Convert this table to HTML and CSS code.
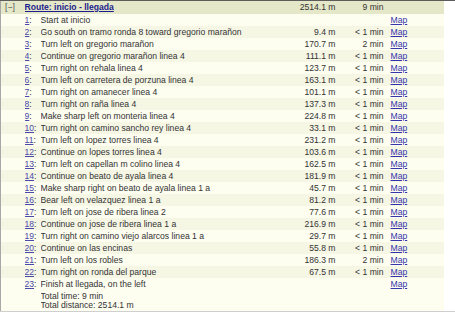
FILE: index.html
```html
<!DOCTYPE html>
<html>
<head>
<meta charset="utf-8">
<link rel="stylesheet" href="styles.css">
</head>
<body>
<div class="frame">
  <table class="route">
    <colgroup>
      <col class="c-toggle"><col class="c-num"><col class="c-text"><col class="c-dist"><col class="c-time"><col class="c-map">
    </colgroup>
    <tr class="head">
      <td class="toggle">[−]</td>
      <td colspan="2"><a class="title" href="#">Route: inicio - llegada</a></td>
      <td class="dist">2514.1 m</td>
      <td class="time">9 min</td>
      <td></td>
    </tr>
    <tr><td></td><td><a href="#">1</a>:</td><td>Start at inicio</td><td class="dist"></td><td class="time"></td><td class="map"><a href="#">Map</a></td></tr>
    <tr><td></td><td><a href="#">2</a>:</td><td>Go south on tramo ronda 8 toward gregorio marañon</td><td class="dist">9.4 m</td><td class="time">&lt; 1 min</td><td class="map"><a href="#">Map</a></td></tr>
    <tr><td></td><td><a href="#">3</a>:</td><td>Turn left on gregorio marañon</td><td class="dist">170.7 m</td><td class="time">2 min</td><td class="map"><a href="#">Map</a></td></tr>
    <tr><td></td><td><a href="#">4</a>:</td><td>Continue on gregorio marañon linea 4</td><td class="dist">111.1 m</td><td class="time">&lt; 1 min</td><td class="map"><a href="#">Map</a></td></tr>
    <tr><td></td><td><a href="#">5</a>:</td><td>Turn right on rehala linea 4</td><td class="dist">123.7 m</td><td class="time">&lt; 1 min</td><td class="map"><a href="#">Map</a></td></tr>
    <tr><td></td><td><a href="#">6</a>:</td><td>Turn left on carretera de porzuna linea 4</td><td class="dist">163.1 m</td><td class="time">&lt; 1 min</td><td class="map"><a href="#">Map</a></td></tr>
    <tr><td></td><td><a href="#">7</a>:</td><td>Turn right on amanecer linea 4</td><td class="dist">101.1 m</td><td class="time">&lt; 1 min</td><td class="map"><a href="#">Map</a></td></tr>
    <tr><td></td><td><a href="#">8</a>:</td><td>Turn right on raña linea 4</td><td class="dist">137.3 m</td><td class="time">&lt; 1 min</td><td class="map"><a href="#">Map</a></td></tr>
    <tr><td></td><td><a href="#">9</a>:</td><td>Make sharp left on monteria linea 4</td><td class="dist">224.8 m</td><td class="time">&lt; 1 min</td><td class="map"><a href="#">Map</a></td></tr>
    <tr><td></td><td><a href="#">10</a>:</td><td>Turn right on camino sancho rey linea 4</td><td class="dist">33.1 m</td><td class="time">&lt; 1 min</td><td class="map"><a href="#">Map</a></td></tr>
    <tr><td></td><td><a href="#">11</a>:</td><td>Turn left on lopez torres linea 4</td><td class="dist">231.2 m</td><td class="time">&lt; 1 min</td><td class="map"><a href="#">Map</a></td></tr>
    <tr><td></td><td><a href="#">12</a>:</td><td>Continue on lopes torres linea 4</td><td class="dist">103.6 m</td><td class="time">&lt; 1 min</td><td class="map"><a href="#">Map</a></td></tr>
    <tr><td></td><td><a href="#">13</a>:</td><td>Turn left on capellan m colino linea 4</td><td class="dist">162.5 m</td><td class="time">&lt; 1 min</td><td class="map"><a href="#">Map</a></td></tr>
    <tr><td></td><td><a href="#">14</a>:</td><td>Continue on beato de ayala linea 4</td><td class="dist">181.9 m</td><td class="time">&lt; 1 min</td><td class="map"><a href="#">Map</a></td></tr>
    <tr><td></td><td><a href="#">15</a>:</td><td>Make sharp right on beato de ayala linea 1 a</td><td class="dist">45.7 m</td><td class="time">&lt; 1 min</td><td class="map"><a href="#">Map</a></td></tr>
    <tr><td></td><td><a href="#">16</a>:</td><td>Bear left on velazquez linea 1 a</td><td class="dist">81.2 m</td><td class="time">&lt; 1 min</td><td class="map"><a href="#">Map</a></td></tr>
    <tr><td></td><td><a href="#">17</a>:</td><td>Turn left on jose de ribera linea 2</td><td class="dist">77.6 m</td><td class="time">&lt; 1 min</td><td class="map"><a href="#">Map</a></td></tr>
    <tr><td></td><td><a href="#">18</a>:</td><td>Continue on jose de ribera linea 1 a</td><td class="dist">216.9 m</td><td class="time">&lt; 1 min</td><td class="map"><a href="#">Map</a></td></tr>
    <tr><td></td><td><a href="#">19</a>:</td><td>Turn right on camino viejo alarcos linea 1 a</td><td class="dist">29.7 m</td><td class="time">&lt; 1 min</td><td class="map"><a href="#">Map</a></td></tr>
    <tr><td></td><td><a href="#">20</a>:</td><td>Continue on las encinas</td><td class="dist">55.8 m</td><td class="time">&lt; 1 min</td><td class="map"><a href="#">Map</a></td></tr>
    <tr><td></td><td><a href="#">21</a>:</td><td>Turn left on los robles</td><td class="dist">186.3 m</td><td class="time">2 min</td><td class="map"><a href="#">Map</a></td></tr>
    <tr><td></td><td><a href="#">22</a>:</td><td>Turn right on ronda del parque</td><td class="dist">67.5 m</td><td class="time">&lt; 1 min</td><td class="map"><a href="#">Map</a></td></tr>
    <tr><td></td><td><a href="#">23</a>:</td><td>Finish at llegada, on the left</td><td class="dist"></td><td class="time"></td><td class="map"><a href="#">Map</a></td></tr>
    <tr class="totals">
      <td></td><td></td>
      <td colspan="4"><div>Total time: 9 min</div><div>Total distance: 2514.1 m</div></td>
    </tr>
  </table>
</div>
</body>
</html>
```

FILE: styles.css
```css
html, body {
  margin: 0;
  padding: 0;
  background: #ffffff;
}

.frame {
  border-top: 1px solid #5c5c5c;
  border-bottom: 1px solid #cfcfcf;
}

.route {
  width: 443px;
  border-collapse: collapse;
  table-layout: fixed;
  border-left: 1px solid #a8a8a8;
  background: #fdfdf0;
  font-family: "Liberation Sans", Arial, sans-serif;
  font-size: 8.6px;
  color: #333333;
}

.c-toggle { width: 24px; }
.c-num { width: 16px; }
.c-text { width: 241px; }
.c-dist { width: 54px; }
.c-time { width: 48px; }
.c-map { width: 60px; }

.route td {
  padding: 0;
  height: 12px;
  line-height: 12px;
  white-space: nowrap;
  overflow: hidden;
  vertical-align: middle;
}

.route tr:nth-child(odd) {
  background: #f6f6e5;
}

.route tr.head {
  background: #e5e8c8;
}

.route tr.head td {
  height: 13px;
  line-height: 13px;
}

.toggle {
  padding-left: 4px !important;
  color: #555555;
}

.route a {
  color: #4a4aa8;
  text-decoration: underline;
}

.route a.title {
  color: #1c1c8c;
  font-weight: bold;
}

.dist, .time {
  text-align: right;
}

.map {
  padding-left: 7px !important;
}

.map a {
  color: #3535ac;
}

.route tr.totals {
  background: #fdfdf0;
}

.route tr.totals td {
  height: auto;
  line-height: 9px;
  padding: 2px 0 1px 0;
  vertical-align: top;
}
```
